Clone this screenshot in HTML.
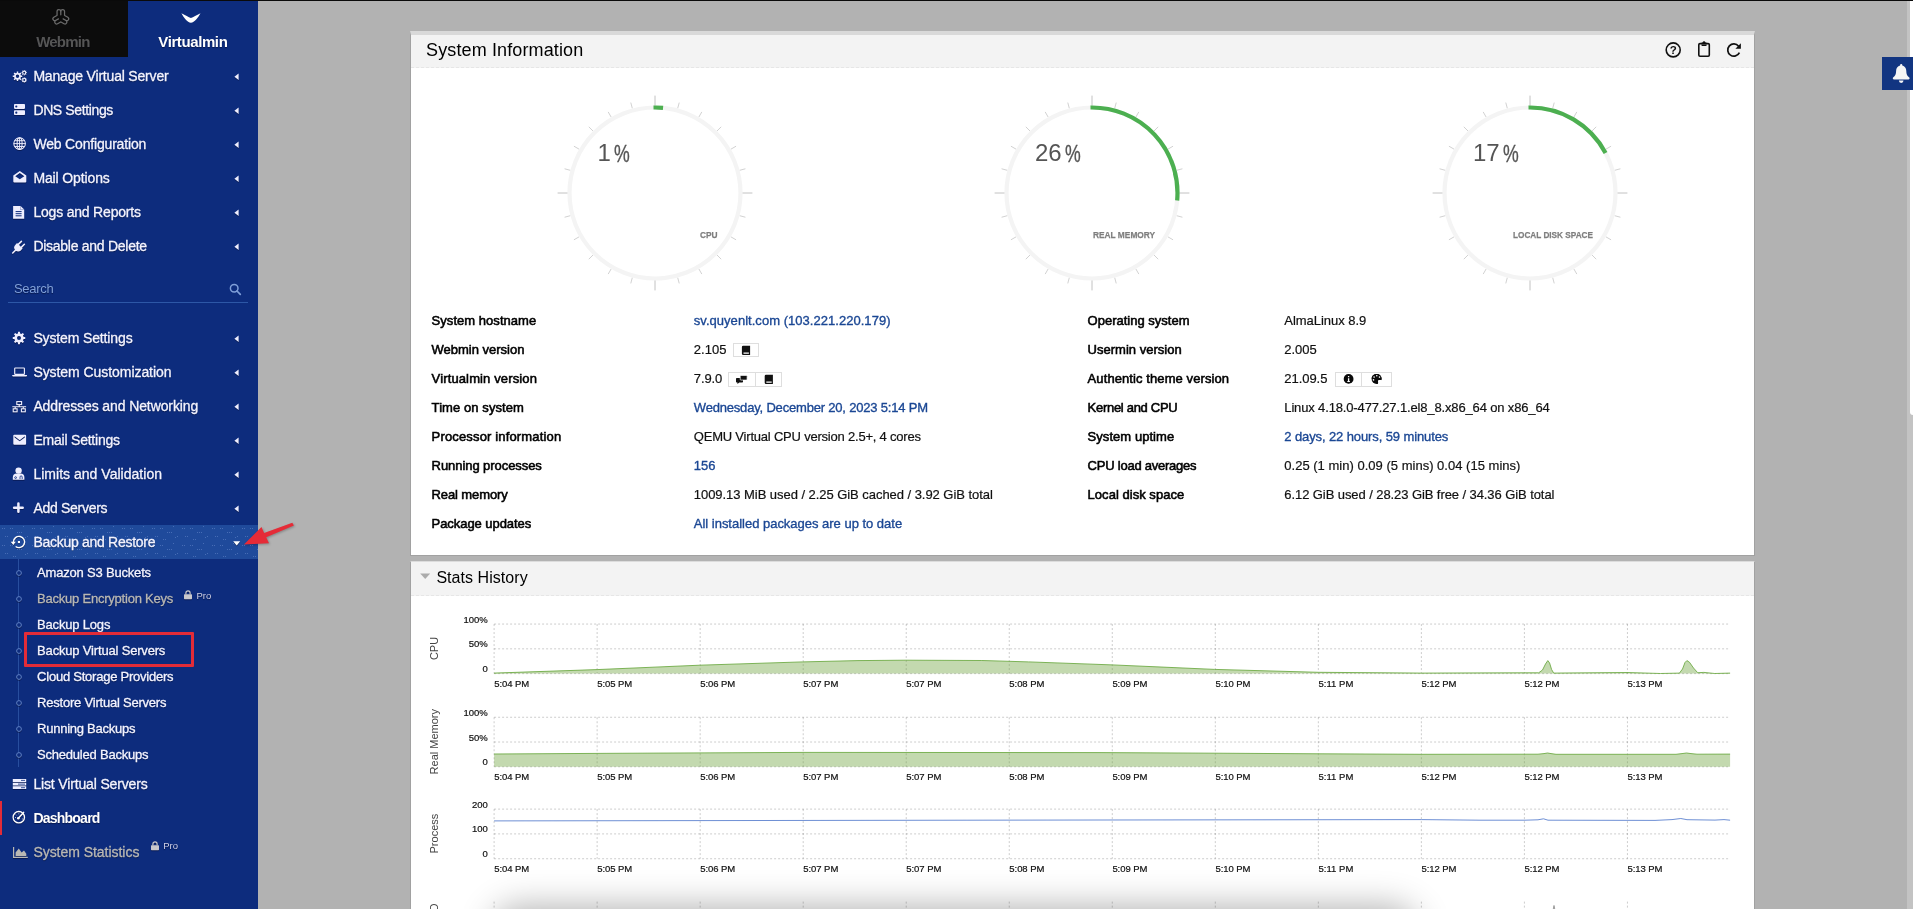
<!DOCTYPE html>
<html lang="en">
<head>
<meta charset="utf-8">
<title>Virtualmin - System Information</title>
<style>
html,body{margin:0;padding:0}
html{overflow:hidden}
body{width:1913px;height:909px;overflow:hidden;position:relative;background:#b2b2b2;
 font-family:"Liberation Sans",Arial,sans-serif;color:#000}
.t{position:absolute;white-space:pre;line-height:1;display:block;text-decoration:none}
ul{list-style:none;margin:0;padding:0}
svg{position:absolute;overflow:visible}
#topline{position:absolute;left:0;top:0;width:1913px;height:1px;background:#0a0a0a;z-index:5}
/* ---------- sidebar ---------- */
#sidebar{will-change:transform;position:absolute;left:0;top:0;width:258px;height:909px;background:#0d2c7d;overflow:hidden}
#tab-webmin{position:absolute;left:0;top:0;width:128px;height:56.5px;background:#0c0c0c}
#tab-virtualmin{position:absolute;left:128px;top:0;width:130px;height:56.5px}
#sidebar .t{text-shadow:0 1px 1px rgba(0,0,20,.45)}
#sidebar li{position:absolute;left:0;width:258px}
#sidebar li>svg{filter:drop-shadow(0 1px .4px rgba(0,0,25,.4))}
#sidebar li.hl>svg:first-child{filter:none}
#sidebar li.hl{background:#1f4a9b}
#search-line{position:absolute;left:8px;top:302px;width:240px;height:1px;background:#2d57a6}
#tree-line{position:absolute;left:18px;top:559px;width:1px;height:208px;background:#284e9e}
#active-bar{position:absolute;left:0;top:801px;width:2px;height:34px;background:#e22c38}
/* ---------- main ---------- */
#main{position:absolute;left:258px;top:0;width:1655px;height:909px;overflow:hidden}
.panel{position:absolute;background:#fff;box-sizing:border-box;border:1px solid #a1a1a1;will-change:transform}
.panel-head{position:absolute;left:0;right:0;background:#f3f3f3;border-bottom:1px dashed #e6e6e6}
.vbtn{position:absolute;box-sizing:border-box;border:1px solid #dedede;background:#fff}
#bell{position:absolute;left:1882px;top:57px;width:31px;height:33px;background:#123581}
#sb-track{position:absolute;left:1907px;top:1px;width:6px;height:908px;background:#c3c3c3}
#sb-thumb{position:absolute;left:1910px;top:1px;width:3px;height:414px;background:#fff;border-radius:0 0 0 3px}

</style>
</head>
<body>
<aside id="sidebar">
<div id="tab-webmin"><svg width="24" height="22" viewBox="49 6 24 22" style="left:49px;top:6px"><path d="M57.05 15.15 L57.05 11.60 A1.875 1.875 0 0 1 60.80 11.60 A1.875 1.875 0 0 1 64.55 11.60 L64.55 15.15 L64.71 15.43 L67.78 17.20 A1.875 1.875 0 0 1 65.91 20.45 A1.875 1.875 0 0 1 64.03 23.70 L60.96 21.92 L60.64 21.92 L57.57 23.70 A1.875 1.875 0 0 1 55.69 20.45 A1.875 1.875 0 0 1 53.82 17.20 L56.89 15.43 Z" fill="none" stroke="#6b6b6b" stroke-width="1.25" stroke-linejoin="round"/><path d="M60.80 11.90 L60.80 14.80 M65.65 20.30 L63.14 18.85 M55.95 20.30 L58.46 18.85 " fill="none" stroke="#6b6b6b" stroke-width="1.25" stroke-linecap="round"/></svg><span class="t" style="left:36.20px;top:34.10px;font-size:15px;font-weight:700;color:#555;letter-spacing:-0.775px;">Webmin</span></div>
<div id="tab-virtualmin"><svg width="22" height="12" viewBox="180 12 22 12" style="left:52px;top:12px"><path fill="#fff" d="M181.400 13.300 C185.500 15.200 188.500 17.400 190.900 18.000 C193.400 17.400 196.400 15.200 200.500 13.300 C198.300 17.200 194.400 22.800 190.900 22.800 C187.400 22.800 183.600 17.200 181.400 13.300Z"/></svg><span class="t" style="left:30.30px;top:34.10px;font-size:15px;font-weight:700;color:#fff;letter-spacing:-0.398px;">Virtualmin</span></div>
<nav><ul>
<li style="top:59px;height:34px"><svg width="32" height="34" viewBox="0 59 32 34" style="left:0;top:0"><path fill="#eeeeff" fill-rule="evenodd" d="M20.91 75.52 L22.25 75.60 L22.25 77.00 L20.91 77.08 L20.47 78.16 L21.36 79.16 L20.36 80.16 L19.36 79.27 L18.28 79.71 L18.20 81.05 L16.80 81.05 L16.72 79.71 L15.64 79.27 L14.64 80.16 L13.64 79.16 L14.53 78.16 L14.09 77.08 L12.75 77.00 L12.75 75.60 L14.09 75.52 L14.53 74.44 L13.64 73.44 L14.64 72.44 L15.64 73.33 L16.72 72.89 L16.80 71.55 L18.20 71.55 L18.28 72.89 L19.36 73.33 L20.36 72.44 L21.36 73.44 L20.47 74.44Z M15.80 76.30 a1.70 1.70 0 1 0 3.40 0 a1.70 1.70 0 1 0 -3.40 0Z"/><path fill="#eeeeff" fill-rule="evenodd" d="M26.10 72.26 L26.97 72.29 L26.97 73.11 L26.10 73.14 L25.85 73.74 L26.45 74.37 L25.87 74.95 L25.24 74.35 L24.64 74.60 L24.61 75.47 L23.79 75.47 L23.76 74.60 L23.16 74.35 L22.53 74.95 L21.95 74.37 L22.55 73.74 L22.30 73.14 L21.43 73.11 L21.43 72.29 L22.30 72.26 L22.55 71.66 L21.95 71.03 L22.53 70.45 L23.16 71.05 L23.76 70.80 L23.79 69.93 L24.61 69.93 L24.64 70.80 L25.24 71.05 L25.87 70.45 L26.45 71.03 L25.85 71.66Z M23.25 72.70 a0.95 0.95 0 1 0 1.90 0 a0.95 0.95 0 1 0 -1.90 0Z"/><path fill="#eeeeff" fill-rule="evenodd" d="M26.10 79.56 L26.97 79.59 L26.97 80.41 L26.10 80.44 L25.85 81.04 L26.45 81.67 L25.87 82.25 L25.24 81.65 L24.64 81.90 L24.61 82.77 L23.79 82.77 L23.76 81.90 L23.16 81.65 L22.53 82.25 L21.95 81.67 L22.55 81.04 L22.30 80.44 L21.43 80.41 L21.43 79.59 L22.30 79.56 L22.55 78.96 L21.95 78.33 L22.53 77.75 L23.16 78.35 L23.76 78.10 L23.79 77.23 L24.61 77.23 L24.64 78.10 L25.24 78.35 L25.87 77.75 L26.45 78.33 L25.85 78.96Z M23.25 80.00 a0.95 0.95 0 1 0 1.90 0 a0.95 0.95 0 1 0 -1.90 0Z"/></svg><a class="t" style="left:33.40px;top:9.85px;font-size:14px;color:#f4f4ff;letter-spacing:-0.188px;-webkit-text-stroke:.3px;">Manage Virtual Server</a><svg width="6" height="8" viewBox="0 0 6 8" style="left:233.5px;top:13.8px"><path fill="#eeeeff" d="M4.6 0.4 V7.1 L0.4 3.75Z"/></svg></li>
<li style="top:93px;height:34px"><svg width="32" height="34" viewBox="0 93 32 34" style="left:0;top:0"><rect x="14" y="104" width="11" height="4.9" rx="0.8" fill="#eeeeff"/><rect x="14" y="110.2" width="11" height="4.9" rx="0.8" fill="#eeeeff"/><circle cx="16.3" cy="106.5" r="1.1" fill="#0d2c7d"/><circle cx="16.3" cy="112.7" r="1.1" fill="#0d2c7d"/></svg><a class="t" style="left:33.40px;top:9.85px;font-size:14px;color:#f4f4ff;letter-spacing:-0.369px;-webkit-text-stroke:.3px;">DNS Settings</a><svg width="6" height="8" viewBox="0 0 6 8" style="left:233.5px;top:13.8px"><path fill="#eeeeff" d="M4.6 0.4 V7.1 L0.4 3.75Z"/></svg></li>
<li style="top:127px;height:34px"><svg width="32" height="34" viewBox="0 127 32 34" style="left:0;top:0"><g fill="none" stroke="#eeeeff" stroke-width="1.05"><circle cx="19.6" cy="143.6" r="5.8"/><ellipse cx="19.6" cy="143.6" rx="2.5" ry="5.8"/><path d="M13.8 143.6h11.6M14.6 140.7h10M14.6 146.5h10M19.6 137.8v11.6" stroke-width=".95"/></g></svg><a class="t" style="left:33.40px;top:9.85px;font-size:14px;color:#f4f4ff;letter-spacing:-0.176px;-webkit-text-stroke:.3px;">Web Configuration</a><svg width="6" height="8" viewBox="0 0 6 8" style="left:233.5px;top:13.8px"><path fill="#eeeeff" d="M4.6 0.4 V7.1 L0.4 3.75Z"/></svg></li>
<li style="top:161px;height:34px"><svg width="32" height="34" viewBox="0 161 32 34" style="left:0;top:0"><path fill="#eeeeff" fill-rule="evenodd" d="M13.3 175.6 L19.8 170.9 L26.3 175.6 V181.5 a1 1 0 0 1 -1 1 H14.3 a1 1 0 0 1 -1 -1Z M15.3 176.2 L19.8 179.3 L24.3 176.2 L19.8 172.9Z"/></svg><a class="t" style="left:33.40px;top:9.85px;font-size:14px;color:#f4f4ff;letter-spacing:-0.123px;-webkit-text-stroke:.3px;">Mail Options</a><svg width="6" height="8" viewBox="0 0 6 8" style="left:233.5px;top:13.8px"><path fill="#eeeeff" d="M4.6 0.4 V7.1 L0.4 3.75Z"/></svg></li>
<li style="top:195px;height:34px"><svg width="32" height="34" viewBox="0 195 32 34" style="left:0;top:0"><path fill="#eeeeff" d="M13.1 206 H20.6 L24.2 209.6 V218.8 H13.1Z"/><path fill="#0d2c7d" d="M20.4 206 V209.9 H24.2 L24.2 209.6 H20.9 V206Z" opacity=".55"/><path stroke="#0d2c7d" stroke-width="1" d="M15.6 211.6h6M15.6 213.7h6M15.6 215.8h6"/></svg><a class="t" style="left:33.40px;top:9.85px;font-size:14px;color:#f4f4ff;letter-spacing:-0.196px;-webkit-text-stroke:.3px;">Logs and Reports</a><svg width="6" height="8" viewBox="0 0 6 8" style="left:233.5px;top:13.8px"><path fill="#eeeeff" d="M4.6 0.4 V7.1 L0.4 3.75Z"/></svg></li>
<li style="top:229px;height:34px"><svg width="32" height="34" viewBox="0 229 32 34" style="left:0;top:0"><g transform="rotate(45 18.5 247.2)"><path fill="#eeeeff" d="M14.6 245.3 H22.4 V247.6 a3.9 3.9 0 0 1 -7.8 0Z"/><path stroke="#eeeeff" stroke-width="1.6" stroke-linecap="round" d="M16.4 241v4M20.6 241v4"/><path stroke="#eeeeff" stroke-width="1.5" stroke-linecap="round" d="M18.5 251v4.4"/></g></svg><a class="t" style="left:33.40px;top:9.85px;font-size:14px;color:#f4f4ff;letter-spacing:-0.268px;-webkit-text-stroke:.3px;">Disable and Delete</a><svg width="6" height="8" viewBox="0 0 6 8" style="left:233.5px;top:13.8px"><path fill="#eeeeff" d="M4.6 0.4 V7.1 L0.4 3.75Z"/></svg></li>
<li style="top:321px;height:34px"><svg width="32" height="34" viewBox="0 321 32 34" style="left:0;top:0"><path fill="#eeeeff" fill-rule="evenodd" d="M23.58 336.95 L25.23 337.08 L25.23 338.92 L23.58 339.05 L22.98 340.49 L24.06 341.75 L22.75 343.06 L21.49 341.98 L20.05 342.58 L19.92 344.23 L18.08 344.23 L17.95 342.58 L16.51 341.98 L15.25 343.06 L13.94 341.75 L15.02 340.49 L14.42 339.05 L12.77 338.92 L12.77 337.08 L14.42 336.95 L15.02 335.51 L13.94 334.25 L15.25 332.94 L16.51 334.02 L17.95 333.42 L18.08 331.77 L19.92 331.77 L20.05 333.42 L21.49 334.02 L22.75 332.94 L24.06 334.25 L22.98 335.51Z M17.00 338.00 a2.00 2.00 0 1 0 4.00 0 a2.00 2.00 0 1 0 -4.00 0Z"/></svg><a class="t" style="left:33.40px;top:9.85px;font-size:14px;color:#f4f4ff;letter-spacing:-0.135px;-webkit-text-stroke:.3px;">System Settings</a><svg width="6" height="8" viewBox="0 0 6 8" style="left:233.5px;top:13.8px"><path fill="#eeeeff" d="M4.6 0.4 V7.1 L0.4 3.75Z"/></svg></li>
<li style="top:355px;height:34px"><svg width="32" height="34" viewBox="0 355 32 34" style="left:0;top:0"><rect x="14.7" y="368" width="9.7" height="6.4" rx="0.6" fill="none" stroke="#eeeeff" stroke-width="1.15"/><path fill="#eeeeff" d="M12.2 375 H27 V375.6 a0.9 0.9 0 0 1 -0.9 0.9 H13.1 a0.9 0.9 0 0 1 -0.9 -0.9Z"/></svg><a class="t" style="left:33.40px;top:9.85px;font-size:14px;color:#f4f4ff;letter-spacing:-0.061px;-webkit-text-stroke:.3px;">System Customization</a><svg width="6" height="8" viewBox="0 0 6 8" style="left:233.5px;top:13.8px"><path fill="#eeeeff" d="M4.6 0.4 V7.1 L0.4 3.75Z"/></svg></li>
<li style="top:389px;height:34px"><svg width="32" height="34" viewBox="0 389 32 34" style="left:0;top:0"><g fill="none" stroke="#eeeeff" stroke-width="1.1"><rect x="16.8" y="401.6" width="4.8" height="3"/><rect x="13.2" y="408.8" width="3.9" height="3"/><rect x="21.4" y="408.8" width="3.9" height="3"/><path d="M12.3 406.7h13.8M19.2 404.8v1.9M15.2 406.7v2M23.3 406.7v2" stroke-width="1.1"/></g></svg><a class="t" style="left:33.40px;top:9.85px;font-size:14px;color:#f4f4ff;letter-spacing:-0.107px;-webkit-text-stroke:.3px;">Addresses and Networking</a><svg width="6" height="8" viewBox="0 0 6 8" style="left:233.5px;top:13.8px"><path fill="#eeeeff" d="M4.6 0.4 V7.1 L0.4 3.75Z"/></svg></li>
<li style="top:423px;height:34px"><svg width="32" height="34" viewBox="0 423 32 34" style="left:0;top:0"><path fill="#eeeeff" fill-rule="evenodd" d="M14.3 434.8 H25.1 a1 1 0 0 1 1 1 V443.8 a1 1 0 0 1 -1 1 H14.3 a1 1 0 0 1 -1 -1 V435.8 a1 1 0 0 1 1 -1Z M14.6 436.3 L19.7 440.2 L24.8 436.3 L24.8 437.4 L19.7 441.3 L14.6 437.4Z"/></svg><a class="t" style="left:33.40px;top:9.85px;font-size:14px;color:#f4f4ff;letter-spacing:-0.214px;-webkit-text-stroke:.3px;">Email Settings</a><svg width="6" height="8" viewBox="0 0 6 8" style="left:233.5px;top:13.8px"><path fill="#eeeeff" d="M4.6 0.4 V7.1 L0.4 3.75Z"/></svg></li>
<li style="top:457px;height:34px"><svg width="32" height="34" viewBox="0 457 32 34" style="left:0;top:0"><circle cx="18.6" cy="470.6" r="3.2" fill="#eeeeff"/><path fill="#eeeeff" d="M12.8 479.8 V477.6 a4 4 0 0 1 4 -4 H20.4 a4 4 0 0 1 4 4 V479.8Z"/><circle cx="15.6" cy="477.6" r="0.9" fill="none" stroke="#0d2c7d" stroke-width=".8"/><path fill="none" stroke="#0d2c7d" stroke-width=".8" d="M20 479 v-2 a1.1 1.1 0 0 1 2.2 0 v2"/></svg><a class="t" style="left:33.40px;top:9.85px;font-size:14px;color:#f4f4ff;letter-spacing:0.022px;-webkit-text-stroke:.3px;">Limits and Validation</a><svg width="6" height="8" viewBox="0 0 6 8" style="left:233.5px;top:13.8px"><path fill="#eeeeff" d="M4.6 0.4 V7.1 L0.4 3.75Z"/></svg></li>
<li style="top:491px;height:34px"><svg width="32" height="34" viewBox="0 491 32 34" style="left:0;top:0"><path stroke="#eeeeff" stroke-width="2.5" stroke-linecap="round" d="M14.1 507.7h8.6M18.4 503.6v8.2"/></svg><a class="t" style="left:33.40px;top:9.85px;font-size:14px;color:#f4f4ff;letter-spacing:-0.290px;-webkit-text-stroke:.3px;">Add Servers</a><svg width="6" height="8" viewBox="0 0 6 8" style="left:233.5px;top:13.8px"><path fill="#eeeeff" d="M4.6 0.4 V7.1 L0.4 3.75Z"/></svg></li>
<li class="hl" style="top:525px;height:34px"><svg width="258" height="34" style="left:0;top:0" aria-hidden="true"><defs><pattern id="hltex" width="30" height="17" patternUnits="userSpaceOnUse"><path fill="#7f9ddb" fill-opacity=".42" d="M2 3h1v1h-1zM4 3h1v1h-1zM10 3h1v1h-1zM12 3h1v1h-1zM17 7h1v1h-1zM19 7h1v1h-1zM21 7h1v1h-1zM5 11h1v1h-1zM7 11h1v1h-1zM25 12h1v1h-1zM27 11h1v1h-1zM13 14h1v1h-1zM15 14h1v1h-1zM23 1h1v1h-1z"/></pattern></defs><rect width="258" height="34" fill="url(#hltex)"/></svg><svg width="32" height="34" viewBox="0 525 32 34" style="left:0;top:0"><path fill="none" stroke="#fff" stroke-width="1.4" d="M13.4 542 a5.6 5.6 0 1 1 2.2 4.45"/><path fill="#fff" d="M10.7 541.7 H15.8 L13.3 545.1Z"/><rect x="17.9" y="541" width="2.1" height="2.1" fill="#fff"/></svg><a class="t" style="left:33.40px;top:9.85px;font-size:14px;color:#f4f4ff;letter-spacing:-0.283px;-webkit-text-stroke:.3px;">Backup and Restore</a><svg width="8" height="6" viewBox="0 0 8 6" style="left:233px;top:15.8px"><path fill="#fff" d="M0.2 0.2 H7.2 L3.7 4.4Z"/></svg></li>
</ul>
<div id="search"><span class="t" style="left:14.00px;top:281.90px;font-size:13px;color:#7f9fd9;letter-spacing:-0.310px;">Search</span><svg width="14" height="14" viewBox="0 0 14 14" style="left:228.6px;top:282.6px"><circle cx="5.2" cy="5.2" r="3.8" fill="none" stroke="#7f9fd9" stroke-width="1.5"/><path d="M8.0 8.0 L11.3 11.3" stroke="#7f9fd9" stroke-width="1.7" stroke-linecap="round"/></svg><div id="search-line"></div></div>
<div id="tree-line"></div>
<ul>
<li style="top:559.5px;height:26px"><svg style="left:14.5px;top:9px" width="8" height="8" viewBox="0 0 8 8"><circle cx="4" cy="4" r="2.4" fill="#0d2c7d" stroke="#5f80c4" stroke-width="1"/></svg><a class="t" style="left:37.10px;top:6.60px;font-size:13px;color:#f4f4ff;letter-spacing:-0.192px;-webkit-text-stroke:.3px;">Amazon S3 Buckets</a></li>
<li style="top:585.5px;height:26px"><svg style="left:14.5px;top:9px" width="8" height="8" viewBox="0 0 8 8"><circle cx="4" cy="4" r="2.4" fill="#0d2c7d" stroke="#5f80c4" stroke-width="1"/></svg><a class="t" style="left:37.10px;top:6.60px;font-size:13px;color:#b9b8b4;letter-spacing:-0.224px;-webkit-text-stroke:.3px;">Backup Encryption Keys</a><svg width="9" height="10" viewBox="0 0 9 10" style="left:183.8px;top:4.4px"><path fill="#c9c8cc" d="M0.6 4.2 H7.4 a0.6 0.6 0 0 1 .6 .6 V8.6 a0.6 0.6 0 0 1 -.6 .6 H0.6 a0.6 0.6 0 0 1 -.6 -.6 V4.8 a0.6 0.6 0 0 1 .6 -.6Z"/><path fill="none" stroke="#c9c8cc" stroke-width="1.2" d="M1.9 4.4 V2.9 a2.1 2.1 0 0 1 4.2 0 V4.4"/></svg><span class="t" style="left:196.50px;top:5.66px;font-size:9.5px;color:#cfd0e6;letter-spacing:-0.039px;">Pro</span></li>
<li style="top:611.5px;height:26px"><svg style="left:14.5px;top:9px" width="8" height="8" viewBox="0 0 8 8"><circle cx="4" cy="4" r="2.4" fill="#0d2c7d" stroke="#5f80c4" stroke-width="1"/></svg><a class="t" style="left:37.10px;top:6.60px;font-size:13px;color:#f4f4ff;letter-spacing:-0.188px;-webkit-text-stroke:.3px;">Backup Logs</a></li>
<li style="top:637.5px;height:26px"><svg style="left:14.5px;top:9px" width="8" height="8" viewBox="0 0 8 8"><circle cx="4" cy="4" r="2.4" fill="#0d2c7d" stroke="#5f80c4" stroke-width="1"/></svg><a class="t" style="left:37.10px;top:6.60px;font-size:13px;color:#f4f4ff;letter-spacing:-0.177px;-webkit-text-stroke:.3px;">Backup Virtual Servers</a></li>
<li style="top:663.5px;height:26px"><svg style="left:14.5px;top:9px" width="8" height="8" viewBox="0 0 8 8"><circle cx="4" cy="4" r="2.4" fill="#0d2c7d" stroke="#5f80c4" stroke-width="1"/></svg><a class="t" style="left:37.10px;top:6.60px;font-size:13px;color:#f4f4ff;letter-spacing:-0.233px;-webkit-text-stroke:.3px;">Cloud Storage Providers</a></li>
<li style="top:689.5px;height:26px"><svg style="left:14.5px;top:9px" width="8" height="8" viewBox="0 0 8 8"><circle cx="4" cy="4" r="2.4" fill="#0d2c7d" stroke="#5f80c4" stroke-width="1"/></svg><a class="t" style="left:37.10px;top:6.60px;font-size:13px;color:#f4f4ff;letter-spacing:-0.216px;-webkit-text-stroke:.3px;">Restore Virtual Servers</a></li>
<li style="top:715.5px;height:26px"><svg style="left:14.5px;top:9px" width="8" height="8" viewBox="0 0 8 8"><circle cx="4" cy="4" r="2.4" fill="#0d2c7d" stroke="#5f80c4" stroke-width="1"/></svg><a class="t" style="left:37.10px;top:6.60px;font-size:13px;color:#f4f4ff;letter-spacing:-0.256px;-webkit-text-stroke:.3px;">Running Backups</a></li>
<li style="top:741.5px;height:26px"><svg style="left:14.5px;top:9px" width="8" height="8" viewBox="0 0 8 8"><circle cx="4" cy="4" r="2.4" fill="#0d2c7d" stroke="#5f80c4" stroke-width="1"/></svg><a class="t" style="left:37.10px;top:6.60px;font-size:13px;color:#f4f4ff;letter-spacing:-0.220px;-webkit-text-stroke:.3px;">Scheduled Backups</a></li>
</ul>
<ul>
<li style="top:767px;height:34px"><svg width="32" height="34" viewBox="0 767 32 34" style="left:0;top:0"><path fill="#eeeeff" d="M12.8 779 H26.2 V781.9 H12.8Z M12.8 782.7 H26.2 V785.5 H12.8Z M12.8 786.3 H26.2 V789.1 H12.8Z"/><path stroke="#0d2c7d" stroke-width=".8" d="M21 780.4h4M18 784.1h7M21 787.7h4"/></svg><a class="t" style="left:33.40px;top:9.85px;font-size:14px;color:#f4f4ff;letter-spacing:-0.150px;-webkit-text-stroke:.3px;">List Virtual Servers</a></li>
<li style="top:801px;height:34px"><svg width="32" height="34" viewBox="0 801 32 34" style="left:0;top:0"><circle cx="18.8" cy="817.2" r="5.7" fill="none" stroke="#fff" stroke-width="1.3"/><path stroke="#fff" stroke-width="1.5" stroke-linecap="round" d="M18.3 818.3 L23.6 812.4"/><circle cx="18.3" cy="818.3" r="1.3" fill="#fff"/><path stroke="#fff" stroke-width=".8" d="M15 817.6h.9M15.9 814.7l.6.6M18.8 813.4v.9M21.9 819h.9"/></svg><a class="t" style="left:33.40px;top:9.85px;font-size:14px;font-weight:700;color:#fff;letter-spacing:-0.768px;">Dashboard</a></li>
<li style="top:835px;height:34px"><svg width="32" height="34" viewBox="0 835 32 34" style="left:0;top:0"><path fill="none" stroke="#b9b8b4" stroke-width="1.2" d="M13.6 846.9 V857.3 H27.8"/><path fill="#b9b8b4" d="M15.6 856 V852.6 L18.8 848.6 L21.6 852.4 L24 850.4 L26.3 853.8 V856Z"/></svg><a class="t" style="left:33.40px;top:9.85px;font-size:14px;color:#b9b8b4;letter-spacing:-0.036px;-webkit-text-stroke:.3px;">System Statistics</a><svg width="9" height="10" viewBox="0 0 9 10" style="left:150.7px;top:6.4px"><path fill="#c9c8cc" d="M0.6 4.2 H7.4 a0.6 0.6 0 0 1 .6 .6 V8.6 a0.6 0.6 0 0 1 -.6 .6 H0.6 a0.6 0.6 0 0 1 -.6 -.6 V4.8 a0.6 0.6 0 0 1 .6 -.6Z"/><path fill="none" stroke="#c9c8cc" stroke-width="1.2" d="M1.9 4.4 V2.9 a2.1 2.1 0 0 1 4.2 0 V4.4"/></svg><span class="t" style="left:163.30px;top:5.86px;font-size:9.5px;color:#cfd0e6;letter-spacing:-0.039px;">Pro</span></li>
</ul></nav>
<div id="active-bar"></div>
</aside>
<main id="main">
<section class="panel" style="left:152px;top:31px;width:1345px;height:525px;border-top:4px solid #d9d9d9">
<header class="panel-head" style="top:0;height:32px"><h2 class="t" style="left:15.00px;top:5.96px;font-size:18px;letter-spacing:0.128px;margin:0;font-weight:400;">System Information</h2><svg width="90" height="24" viewBox="1660 38 90 24" style="left:1249px;top:3px"><circle cx="1673.2" cy="49.9" r="7.0" fill="none" stroke="#111" stroke-width="1.6"/><text x="1673.2" y="54.0" text-anchor="middle" font-size="11.5" font-weight="700" fill="#111">?</text><rect x="1698.8" y="43.6" width="10.5" height="12.6" rx="1.2" fill="none" stroke="#111" stroke-width="1.6"/><path d="M1701.3 44.2 V43.2 a0.8 0.8 0 0 1 .8 -.8 H1702.6 a1.5 1.5 0 0 1 2.9 0 H1706 a0.8 0.8 0 0 1 .8 .8 V44.2Z" fill="#111"/><path d="M1701.6 45.3 H1706.5" stroke="#111" stroke-width="1.4"/><path d="M1738.6 46.2 A6.1 6.1 0 1 0 1739.4 52.6" fill="none" stroke="#111" stroke-width="1.7"/><path d="M1740.9 43.2 V48.7 H1735.4Z" fill="#111"/></svg></header>
<figure style="position:absolute;margin:0;left:138.65px;top:53.4px;width:210px;height:210px"><svg width="210" height="210" viewBox="-105 -105 210 210" style="left:0;top:0"><line x1="0.00" y1="-87.00" x2="0.00" y2="-97.40" stroke="#c2c2c2" stroke-width="1"/><line x1="22.65" y1="-84.52" x2="24.23" y2="-90.41" stroke="#d2d2d2" stroke-width="1"/><line x1="43.75" y1="-75.78" x2="46.80" y2="-81.06" stroke="#d2d2d2" stroke-width="1"/><line x1="61.87" y1="-61.87" x2="66.19" y2="-66.19" stroke="#d2d2d2" stroke-width="1"/><line x1="75.78" y1="-43.75" x2="81.06" y2="-46.80" stroke="#d2d2d2" stroke-width="1"/><line x1="84.52" y1="-22.65" x2="90.41" y2="-24.23" stroke="#d2d2d2" stroke-width="1"/><line x1="87.00" y1="-0.00" x2="97.40" y2="-0.00" stroke="#c2c2c2" stroke-width="1"/><line x1="84.52" y1="22.65" x2="90.41" y2="24.23" stroke="#d2d2d2" stroke-width="1"/><line x1="75.78" y1="43.75" x2="81.06" y2="46.80" stroke="#d2d2d2" stroke-width="1"/><line x1="61.87" y1="61.87" x2="66.19" y2="66.19" stroke="#d2d2d2" stroke-width="1"/><line x1="43.75" y1="75.78" x2="46.80" y2="81.06" stroke="#d2d2d2" stroke-width="1"/><line x1="22.65" y1="84.52" x2="24.23" y2="90.41" stroke="#d2d2d2" stroke-width="1"/><line x1="0.00" y1="87.00" x2="0.00" y2="97.40" stroke="#c2c2c2" stroke-width="1"/><line x1="-22.65" y1="84.52" x2="-24.23" y2="90.41" stroke="#d2d2d2" stroke-width="1"/><line x1="-43.75" y1="75.78" x2="-46.80" y2="81.06" stroke="#d2d2d2" stroke-width="1"/><line x1="-61.87" y1="61.87" x2="-66.19" y2="66.19" stroke="#d2d2d2" stroke-width="1"/><line x1="-75.78" y1="43.75" x2="-81.06" y2="46.80" stroke="#d2d2d2" stroke-width="1"/><line x1="-84.52" y1="22.65" x2="-90.41" y2="24.23" stroke="#d2d2d2" stroke-width="1"/><line x1="-87.00" y1="0.00" x2="-97.40" y2="0.00" stroke="#c2c2c2" stroke-width="1"/><line x1="-84.52" y1="-22.65" x2="-90.41" y2="-24.23" stroke="#d2d2d2" stroke-width="1"/><line x1="-75.78" y1="-43.75" x2="-81.06" y2="-46.80" stroke="#d2d2d2" stroke-width="1"/><line x1="-61.87" y1="-61.87" x2="-66.19" y2="-66.19" stroke="#d2d2d2" stroke-width="1"/><line x1="-43.75" y1="-75.78" x2="-46.80" y2="-81.06" stroke="#d2d2d2" stroke-width="1"/><line x1="-22.65" y1="-84.52" x2="-24.23" y2="-90.41" stroke="#d2d2d2" stroke-width="1"/><circle cx="0" cy="0" r="85.5" fill="none" stroke="#f4f4f4" stroke-width="4.2"/><path d="M-1.49 -85.49 A85.5 85.5 0 0 1 8.05 -85.12" fill="none" stroke="#4caf50" stroke-width="4.2"/></svg><span class="t" style="left:47.80px;top:52.78px;font-size:24px;color:#555;">1</span><span class="t" style="left:64.48px;top:54.33px;font-size:23px;color:#555;transform:scaleX(.77);transform-origin:0 50%;-webkit-text-stroke:.35px #555;">%</span><figcaption class="t" style="left:150.20px;top:142.05px;font-size:9.8px;font-weight:700;color:#7e7e7e;transform:scaleX(0.8508);transform-origin:0 50%;-webkit-text-stroke:.25px;">CPU</figcaption></figure>
<figure style="position:absolute;margin:0;left:576.1px;top:53.4px;width:210px;height:210px"><svg width="210" height="210" viewBox="-105 -105 210 210" style="left:0;top:0"><line x1="0.00" y1="-87.00" x2="0.00" y2="-97.40" stroke="#c2c2c2" stroke-width="1"/><line x1="22.65" y1="-84.52" x2="24.23" y2="-90.41" stroke="#d2d2d2" stroke-width="1"/><line x1="43.75" y1="-75.78" x2="46.80" y2="-81.06" stroke="#d2d2d2" stroke-width="1"/><line x1="61.87" y1="-61.87" x2="66.19" y2="-66.19" stroke="#d2d2d2" stroke-width="1"/><line x1="75.78" y1="-43.75" x2="81.06" y2="-46.80" stroke="#d2d2d2" stroke-width="1"/><line x1="84.52" y1="-22.65" x2="90.41" y2="-24.23" stroke="#d2d2d2" stroke-width="1"/><line x1="87.00" y1="-0.00" x2="97.40" y2="-0.00" stroke="#c2c2c2" stroke-width="1"/><line x1="84.52" y1="22.65" x2="90.41" y2="24.23" stroke="#d2d2d2" stroke-width="1"/><line x1="75.78" y1="43.75" x2="81.06" y2="46.80" stroke="#d2d2d2" stroke-width="1"/><line x1="61.87" y1="61.87" x2="66.19" y2="66.19" stroke="#d2d2d2" stroke-width="1"/><line x1="43.75" y1="75.78" x2="46.80" y2="81.06" stroke="#d2d2d2" stroke-width="1"/><line x1="22.65" y1="84.52" x2="24.23" y2="90.41" stroke="#d2d2d2" stroke-width="1"/><line x1="0.00" y1="87.00" x2="0.00" y2="97.40" stroke="#c2c2c2" stroke-width="1"/><line x1="-22.65" y1="84.52" x2="-24.23" y2="90.41" stroke="#d2d2d2" stroke-width="1"/><line x1="-43.75" y1="75.78" x2="-46.80" y2="81.06" stroke="#d2d2d2" stroke-width="1"/><line x1="-61.87" y1="61.87" x2="-66.19" y2="66.19" stroke="#d2d2d2" stroke-width="1"/><line x1="-75.78" y1="43.75" x2="-81.06" y2="46.80" stroke="#d2d2d2" stroke-width="1"/><line x1="-84.52" y1="22.65" x2="-90.41" y2="24.23" stroke="#d2d2d2" stroke-width="1"/><line x1="-87.00" y1="0.00" x2="-97.40" y2="0.00" stroke="#c2c2c2" stroke-width="1"/><line x1="-84.52" y1="-22.65" x2="-90.41" y2="-24.23" stroke="#d2d2d2" stroke-width="1"/><line x1="-75.78" y1="-43.75" x2="-81.06" y2="-46.80" stroke="#d2d2d2" stroke-width="1"/><line x1="-61.87" y1="-61.87" x2="-66.19" y2="-66.19" stroke="#d2d2d2" stroke-width="1"/><line x1="-43.75" y1="-75.78" x2="-46.80" y2="-81.06" stroke="#d2d2d2" stroke-width="1"/><line x1="-22.65" y1="-84.52" x2="-24.23" y2="-90.41" stroke="#d2d2d2" stroke-width="1"/><circle cx="0" cy="0" r="85.5" fill="none" stroke="#f4f4f4" stroke-width="4.2"/><path d="M-1.49 -85.49 A85.5 85.5 0 0 1 85.17 7.45" fill="none" stroke="#4caf50" stroke-width="4.2"/></svg><span class="t" style="left:47.80px;top:52.78px;font-size:24px;color:#555;">26</span><span class="t" style="left:77.96px;top:54.33px;font-size:23px;color:#555;transform:scaleX(.77);transform-origin:0 50%;-webkit-text-stroke:.35px #555;">%</span><figcaption class="t" style="left:105.70px;top:142.05px;font-size:9.8px;font-weight:700;color:#7e7e7e;transform:scaleX(0.8514);transform-origin:0 50%;-webkit-text-stroke:.25px;">REAL MEMORY</figcaption></figure>
<figure style="position:absolute;margin:0;left:1014.2px;top:53.4px;width:210px;height:210px"><svg width="210" height="210" viewBox="-105 -105 210 210" style="left:0;top:0"><line x1="0.00" y1="-87.00" x2="0.00" y2="-97.40" stroke="#c2c2c2" stroke-width="1"/><line x1="22.65" y1="-84.52" x2="24.23" y2="-90.41" stroke="#d2d2d2" stroke-width="1"/><line x1="43.75" y1="-75.78" x2="46.80" y2="-81.06" stroke="#d2d2d2" stroke-width="1"/><line x1="61.87" y1="-61.87" x2="66.19" y2="-66.19" stroke="#d2d2d2" stroke-width="1"/><line x1="75.78" y1="-43.75" x2="81.06" y2="-46.80" stroke="#d2d2d2" stroke-width="1"/><line x1="84.52" y1="-22.65" x2="90.41" y2="-24.23" stroke="#d2d2d2" stroke-width="1"/><line x1="87.00" y1="-0.00" x2="97.40" y2="-0.00" stroke="#c2c2c2" stroke-width="1"/><line x1="84.52" y1="22.65" x2="90.41" y2="24.23" stroke="#d2d2d2" stroke-width="1"/><line x1="75.78" y1="43.75" x2="81.06" y2="46.80" stroke="#d2d2d2" stroke-width="1"/><line x1="61.87" y1="61.87" x2="66.19" y2="66.19" stroke="#d2d2d2" stroke-width="1"/><line x1="43.75" y1="75.78" x2="46.80" y2="81.06" stroke="#d2d2d2" stroke-width="1"/><line x1="22.65" y1="84.52" x2="24.23" y2="90.41" stroke="#d2d2d2" stroke-width="1"/><line x1="0.00" y1="87.00" x2="0.00" y2="97.40" stroke="#c2c2c2" stroke-width="1"/><line x1="-22.65" y1="84.52" x2="-24.23" y2="90.41" stroke="#d2d2d2" stroke-width="1"/><line x1="-43.75" y1="75.78" x2="-46.80" y2="81.06" stroke="#d2d2d2" stroke-width="1"/><line x1="-61.87" y1="61.87" x2="-66.19" y2="66.19" stroke="#d2d2d2" stroke-width="1"/><line x1="-75.78" y1="43.75" x2="-81.06" y2="46.80" stroke="#d2d2d2" stroke-width="1"/><line x1="-84.52" y1="22.65" x2="-90.41" y2="24.23" stroke="#d2d2d2" stroke-width="1"/><line x1="-87.00" y1="0.00" x2="-97.40" y2="0.00" stroke="#c2c2c2" stroke-width="1"/><line x1="-84.52" y1="-22.65" x2="-90.41" y2="-24.23" stroke="#d2d2d2" stroke-width="1"/><line x1="-75.78" y1="-43.75" x2="-81.06" y2="-46.80" stroke="#d2d2d2" stroke-width="1"/><line x1="-61.87" y1="-61.87" x2="-66.19" y2="-66.19" stroke="#d2d2d2" stroke-width="1"/><line x1="-43.75" y1="-75.78" x2="-46.80" y2="-81.06" stroke="#d2d2d2" stroke-width="1"/><line x1="-22.65" y1="-84.52" x2="-24.23" y2="-90.41" stroke="#d2d2d2" stroke-width="1"/><circle cx="0" cy="0" r="85.5" fill="none" stroke="#f4f4f4" stroke-width="4.2"/><path d="M-1.49 -85.49 A85.5 85.5 0 0 1 75.56 -40.01" fill="none" stroke="#4caf50" stroke-width="4.2"/></svg><span class="t" style="left:47.80px;top:52.78px;font-size:24px;color:#555;">17</span><span class="t" style="left:77.96px;top:54.33px;font-size:23px;color:#555;transform:scaleX(.77);transform-origin:0 50%;-webkit-text-stroke:.35px #555;">%</span><figcaption class="t" style="left:87.80px;top:142.05px;font-size:9.8px;font-weight:700;color:#7e7e7e;transform:scaleX(0.8381);transform-origin:0 50%;-webkit-text-stroke:.25px;">LOCAL DISK SPACE</figcaption></figure>
<dl style="margin:0">
<dt class="t" style="left:20.60px;top:278.80px;font-size:13px;letter-spacing:0.038px;-webkit-text-stroke:.55px #000;">System hostname</dt><a class="t" style="left:282.80px;top:278.80px;font-size:13px;color:#1b4794;letter-spacing:0.035px;margin:0;-webkit-text-stroke:.35px;">sv.quyenlt.com (103.221.220.179)</a>
<dt class="t" style="left:20.60px;top:307.80px;font-size:13px;letter-spacing:-0.013px;-webkit-text-stroke:.55px #000;">Webmin version</dt><dd class="t" style="left:282.80px;top:307.80px;font-size:13px;color:#111;letter-spacing:0.012px;margin:0;-webkit-text-stroke:.2px;">2.105</dd>
<dt class="t" style="left:20.60px;top:336.80px;font-size:13px;letter-spacing:0.132px;-webkit-text-stroke:.55px #000;">Virtualmin version</dt><dd class="t" style="left:282.80px;top:336.80px;font-size:13px;color:#111;letter-spacing:-0.094px;margin:0;-webkit-text-stroke:.2px;">7.9.0</dd>
<dt class="t" style="left:20.60px;top:365.80px;font-size:13px;letter-spacing:0.084px;-webkit-text-stroke:.55px #000;">Time on system</dt><a class="t" style="left:282.80px;top:365.80px;font-size:13px;color:#1b4794;letter-spacing:-0.188px;margin:0;-webkit-text-stroke:.35px;">Wednesday, December 20, 2023 5:14 PM</a>
<dt class="t" style="left:20.60px;top:394.80px;font-size:13px;letter-spacing:0.154px;-webkit-text-stroke:.55px #000;">Processor information</dt><dd class="t" style="left:282.80px;top:394.80px;font-size:13px;color:#111;letter-spacing:-0.209px;margin:0;-webkit-text-stroke:.2px;">QEMU Virtual CPU version 2.5+, 4 cores</dd>
<dt class="t" style="left:20.60px;top:423.80px;font-size:13px;letter-spacing:-0.066px;-webkit-text-stroke:.55px #000;">Running processes</dt><a class="t" style="left:282.80px;top:423.80px;font-size:13px;color:#1b4794;margin:0;-webkit-text-stroke:.35px;">156</a>
<dt class="t" style="left:20.60px;top:452.80px;font-size:13px;letter-spacing:-0.114px;-webkit-text-stroke:.55px #000;">Real memory</dt><dd class="t" style="left:282.80px;top:452.80px;font-size:13px;color:#111;letter-spacing:-0.047px;margin:0;-webkit-text-stroke:.2px;">1009.13 MiB used / 2.25 GiB cached / 3.92 GiB total</dd>
<dt class="t" style="left:20.60px;top:481.80px;font-size:13px;letter-spacing:-0.060px;-webkit-text-stroke:.55px #000;">Package updates</dt><a class="t" style="left:282.80px;top:481.80px;font-size:13px;color:#1b4794;letter-spacing:-0.015px;margin:0;-webkit-text-stroke:.35px;">All installed packages are up to date</a>
</dl>
<dl style="margin:0">
<dt class="t" style="left:676.60px;top:278.80px;font-size:13px;-webkit-text-stroke:.55px #000;">Operating system</dt><dd class="t" style="left:873.30px;top:278.80px;font-size:13px;color:#111;letter-spacing:-0.039px;margin:0;-webkit-text-stroke:.2px;">AlmaLinux 8.9</dd>
<dt class="t" style="left:676.60px;top:307.80px;font-size:13px;letter-spacing:0.012px;-webkit-text-stroke:.55px #000;">Usermin version</dt><dd class="t" style="left:873.30px;top:307.80px;font-size:13px;color:#111;letter-spacing:-0.010px;margin:0;-webkit-text-stroke:.2px;">2.005</dd>
<dt class="t" style="left:676.60px;top:336.80px;font-size:13px;letter-spacing:0.090px;-webkit-text-stroke:.55px #000;">Authentic theme version</dt><dd class="t" style="left:873.30px;top:336.80px;font-size:13px;color:#111;letter-spacing:-0.042px;margin:0;-webkit-text-stroke:.2px;">21.09.5</dd>
<dt class="t" style="left:676.60px;top:365.80px;font-size:13px;letter-spacing:-0.293px;-webkit-text-stroke:.55px #000;">Kernel and CPU</dt><dd class="t" style="left:873.30px;top:365.80px;font-size:13px;color:#111;letter-spacing:-0.147px;margin:0;-webkit-text-stroke:.2px;">Linux 4.18.0-477.27.1.el8_8.x86_64 on x86_64</dd>
<dt class="t" style="left:676.60px;top:394.80px;font-size:13px;letter-spacing:0.049px;-webkit-text-stroke:.55px #000;">System uptime</dt><a class="t" style="left:873.30px;top:394.80px;font-size:13px;color:#1b4794;letter-spacing:-0.107px;margin:0;-webkit-text-stroke:.35px;">2 days, 22 hours, 59 minutes</a>
<dt class="t" style="left:676.60px;top:423.80px;font-size:13px;letter-spacing:-0.232px;-webkit-text-stroke:.55px #000;">CPU load averages</dt><dd class="t" style="left:873.30px;top:423.80px;font-size:13px;color:#111;letter-spacing:0.014px;margin:0;-webkit-text-stroke:.2px;">0.25 (1 min) 0.09 (5 mins) 0.04 (15 mins)</dd>
<dt class="t" style="left:676.60px;top:452.80px;font-size:13px;letter-spacing:0.031px;-webkit-text-stroke:.55px #000;">Local disk space</dt><dd class="t" style="left:873.30px;top:452.80px;font-size:13px;color:#111;letter-spacing:-0.080px;margin:0;-webkit-text-stroke:.2px;">6.12 GiB used / 28.23 GiB free / 34.36 GiB total</dd>
</dl>
<span class="vbtn" style="left:322.2px;top:308.2px;width:25.5px;height:14.3px"><svg width="25.5" height="14.3" viewBox="733.2 343.2 25.5 14.3" style="left:-1px;top:-1px"><path fill="#111" fill-rule="evenodd" d="M742.10 347.30 a1.3 1.3 0 0 1 1.3 -1.3 H750.30 V355.20 H743.40 a1.3 1.3 0 0 1 -1.3 -1.3Z M743.70 352.60 H749.10 V353.90 H743.70Z"/></svg></span><span class="vbtn" style="left:317.2px;top:337.3px;width:27.6px;height:14.3px"><svg width="27.6" height="14.3" viewBox="728.2 372.3 27.6 14.3" style="left:-1px;top:-1px"><path fill="#111" d="M737.00 378.20 h5.4 a.8 .8 0 0 1 .8 .8 v3.1 a.8 .8 0 0 1 -.8 .8 h-2.9 l-1.900 1.500 v-1.500 h-.6 a.8 .8 0 0 1 -.8 -.8 v-3.100 a.8 .8 0 0 1 .8 -.8Z"/><path fill="#111" d="M741.20 375.70 h5.300 a.8 .8 0 0 1 .8 .8 v3.100 a.8 .8 0 0 1 -.8 .8 h-5.300 a.8 .8 0 0 1 -.8 -.8 v-3.100 a.8 .8 0 0 1 .8 -.8Z" stroke="#fff" stroke-width=".7"/></svg></span><span class="vbtn" style="left:343.8px;top:337.3px;width:26.8px;height:14.3px"><svg width="26.8" height="14.3" viewBox="754.8 372.3 26.8 14.3" style="left:-1px;top:-1px"><path fill="#111" fill-rule="evenodd" d="M764.50 376.40 a1.3 1.3 0 0 1 1.3 -1.3 H772.70 V384.30 H765.80 a1.3 1.3 0 0 1 -1.3 -1.3Z M766.10 381.70 H771.50 V383.00 H766.10Z"/></svg></span><span class="vbtn" style="left:924.2px;top:337.2px;width:26.8px;height:14.4px"><svg width="26.8" height="14.4" viewBox="1335.2 372.2 26.8 14.4" style="left:-1px;top:-1px"><circle cx="1348.80" cy="379.10" r="4.9" fill="#0a0a0a"/><path stroke="#fff" stroke-width="1.300" d="M1348.80 378.40v3.000M1348.80 376.10v1.300"/><path stroke="#fff" stroke-width="1.000" d="M1347.50 381.70h2.600"/></svg></span><span class="vbtn" style="left:950.0px;top:337.2px;width:30.8px;height:14.4px"><svg width="30.8" height="14.4" viewBox="1361.0 372.2 30.8 14.4" style="left:-1px;top:-1px"><path fill="#0a0a0a" d="M1371.60 379.20 a5 5 0 1 1 6.300 4.800 c-.9 .2 -1.300 -.4 -1.100 -1.200 c.3 -1.000 -.1 -1.700 .9 -2.200 c.9 -.4 2.600 .3 3.400 -.6 a5 5 0 0 0 -9.500 -.8Z" transform="rotate(0 1376.60 379.20)"/><circle cx="1376.60" cy="379.20" r="5" fill="#0a0a0a"/><path fill="#fff" d="M1378.20 380.50 c1.200 -.7 3.000 .2 3.600 -.9 l.6 3.600 l-4.000 2.600 c-.7 -.6 -.5 -1.500 -.3 -2.300 c.2 -.9 -.4 -1.800 .1 -3.000Z"/><circle cx="1373.50" cy="380.10" r=".8" fill="#fff"/><circle cx="1374.10" cy="377.30" r=".8" fill="#fff"/><circle cx="1376.80" cy="376.00" r=".8" fill="#fff"/><circle cx="1379.50" cy="377.30" r=".8" fill="#fff"/></svg></span></section>
<section class="panel" style="left:152px;top:561px;width:1345px;height:360px;border-top:1px solid #dcdcdc">
<header class="panel-head" style="top:0;height:33px"><svg width="12" height="8" viewBox="0 0 12 8" style="left:9px;top:11.4px"><path fill="#ababab" d="M0.2 0.4 H10.2 L5.2 5.9Z"/></svg><h2 class="t" style="left:25.40px;top:7.56px;font-size:16px;letter-spacing:0.049px;margin:0;font-weight:400;">Stats History</h2></header>
<svg width="1343" height="330" viewBox="411 596 1343 330" style="left:0;top:34px"><path d="M494.10 624.05H1728.96M494.10 648.85H1728.96M494.10 673.65H1728.96M494.10 624.05V673.65M597.13 624.05V673.65M700.16 624.05V673.65M803.19 624.05V673.65M906.22 624.05V673.65M1009.25 624.05V673.65M1112.28 624.05V673.65M1215.31 624.05V673.65M1318.34 624.05V673.65M1421.37 624.05V673.65M1524.40 624.05V673.65M1627.43 624.05V673.65" fill="none" stroke="#000" stroke-opacity=".2" stroke-width="1" stroke-dasharray="2 2"/><path d="M494.1 673.1 L597.1 669.6 L699.8 665.2 L802.8 661.9 L858.0 660.6 L905.9 660.2 L981.8 660.5 L1028.7 661.9 L1112.3 664.9 L1214.7 669.4 L1318.4 672.3 L1421.7 673.1 L1525.0 672.8 L1538.7 672.8 L1542.5 670.0 L1545.5 664.0 L1547.8 660.6 L1549.6 663.0 L1551.6 669.5 L1553.7 673.1 L1627.0 672.5 L1660.4 673.5 L1679.4 673.1 L1682.5 669.0 L1685.0 662.5 L1686.9 660.6 L1689.5 662.3 L1693.5 668.0 L1697.7 672.7 L1703.9 672.4 L1714.7 673.5 L1730.1 673.1 L1730.1 673.6 L494.1 673.6Z" fill="#689f38" fill-opacity=".4"/><path d="M494.1 673.1 L597.1 669.6 L699.8 665.2 L802.8 661.9 L858.0 660.6 L905.9 660.2 L981.8 660.5 L1028.7 661.9 L1112.3 664.9 L1214.7 669.4 L1318.4 672.3 L1421.7 673.1 L1525.0 672.8 L1538.7 672.8 L1542.5 670.0 L1545.5 664.0 L1547.8 660.6 L1549.6 663.0 L1551.6 669.5 L1553.7 673.1 L1627.0 672.5 L1660.4 673.5 L1679.4 673.1 L1682.5 669.0 L1685.0 662.5 L1686.9 660.6 L1689.5 662.3 L1693.5 668.0 L1697.7 672.7 L1703.9 672.4 L1714.7 673.5 L1730.1 673.1" fill="none" stroke="#6aa840" stroke-opacity=".85" stroke-width="1"/><text transform="translate(438.2 648.5) rotate(-90)" text-anchor="middle" font-size="11" fill="#444">CPU</text><path d="M494.10 717.25H1728.96M494.10 742.02H1728.96M494.10 766.80H1728.96M494.10 717.25V766.80M597.13 717.25V766.80M700.16 717.25V766.80M803.19 717.25V766.80M906.22 717.25V766.80M1009.25 717.25V766.80M1112.28 717.25V766.80M1215.31 717.25V766.80M1318.34 717.25V766.80M1421.37 717.25V766.80M1524.40 717.25V766.80M1627.43 717.25V766.80" fill="none" stroke="#000" stroke-opacity=".2" stroke-width="1" stroke-dasharray="2 2"/><path d="M494.1 754.0 L597.0 753.4 L700.0 752.9 L805.0 752.4 L1100.0 752.6 L1215.0 753.2 L1318.0 753.8 L1421.7 754.3 L1538.0 754.2 L1544.0 753.6 L1547.5 753.0 L1551.0 753.6 L1556.0 754.3 L1676.0 754.3 L1682.0 753.6 L1686.5 753.0 L1691.0 753.6 L1697.0 754.2 L1730.1 754.1 L1730.1 766.8 L494.1 766.8Z" fill="#689f38" fill-opacity=".4"/><path d="M494.1 754.0 L597.0 753.4 L700.0 752.9 L805.0 752.4 L1100.0 752.6 L1215.0 753.2 L1318.0 753.8 L1421.7 754.3 L1538.0 754.2 L1544.0 753.6 L1547.5 753.0 L1551.0 753.6 L1556.0 754.3 L1676.0 754.3 L1682.0 753.6 L1686.5 753.0 L1691.0 753.6 L1697.0 754.2 L1730.1 754.1" fill="none" stroke="#6aa840" stroke-opacity=".85" stroke-width="1"/><text transform="translate(438.2 741.7) rotate(-90)" text-anchor="middle" font-size="11" fill="#444">Real Memory</text><path d="M494.10 809.10H1728.96M494.10 833.92H1728.96M494.10 858.75H1728.96M494.10 809.10V858.75M597.13 809.10V858.75M700.16 809.10V858.75M803.19 809.10V858.75M906.22 809.10V858.75M1009.25 809.10V858.75M1112.28 809.10V858.75M1215.31 809.10V858.75M1318.34 809.10V858.75M1421.37 809.10V858.75M1524.40 809.10V858.75M1627.43 809.10V858.75" fill="none" stroke="#000" stroke-opacity=".2" stroke-width="1" stroke-dasharray="2 2"/><path d="M494.1 820.9 L700.0 820.6 L900.0 820.3 L1100.0 820.0 L1421.7 819.6 L1480.0 820.2 L1525.0 820.2 L1538.0 819.8 L1543.5 818.8 L1548.0 820.2 L1600.0 820.3 L1655.0 820.4 L1672.0 819.6 L1680.8 818.5 L1687.0 819.7 L1715.0 820.1 L1724.0 819.6 L1730.1 820.2" fill="none" stroke="#5e83cf" stroke-opacity=".9" stroke-width="1"/><text transform="translate(438.2 833.6) rotate(-90)" text-anchor="middle" font-size="11" fill="#444">Process</text><path d="M494.10 901.60V951.00M597.13 901.60V951.00M700.16 901.60V951.00M803.19 901.60V951.00M906.22 901.60V951.00M1009.25 901.60V951.00M1112.28 901.60V951.00M1215.31 901.60V951.00M1318.34 901.60V951.00M1421.37 901.60V951.00M1524.40 901.60V951.00M1627.43 901.60V951.00" fill="none" stroke="#000" stroke-opacity=".2" stroke-width="1" stroke-dasharray="2 2"/><path d="M494.1 950.0 L1540.0 950.0 L1547.0 940.0 L1554.0 905.5 L1561.0 940.0 L1568.0 950.0 L1730.0 950.0" fill="none" stroke="#999" stroke-width="1"/><text transform="translate(438.2 903.4) rotate(-90)" text-anchor="end" font-size="11" fill="#444">Disk IO</text></svg>
<span class="t" style="right:1266.20px;top:52.61px;font-size:9.5px;color:#111;-webkit-text-stroke:.2px;">100%</span><span class="t" style="right:1266.20px;top:77.41px;font-size:9.5px;color:#111;-webkit-text-stroke:.2px;">50%</span><span class="t" style="right:1266.20px;top:102.21px;font-size:9.5px;color:#111;-webkit-text-stroke:.2px;">0</span><span class="t" style="left:83.20px;top:116.56px;font-size:9.5px;color:#111;letter-spacing:-0.060px;-webkit-text-stroke:.2px;">5:04 PM</span><span class="t" style="left:186.23px;top:116.56px;font-size:9.5px;color:#111;letter-spacing:-0.060px;-webkit-text-stroke:.2px;">5:05 PM</span><span class="t" style="left:289.26px;top:116.56px;font-size:9.5px;color:#111;letter-spacing:-0.060px;-webkit-text-stroke:.2px;">5:06 PM</span><span class="t" style="left:392.29px;top:116.56px;font-size:9.5px;color:#111;letter-spacing:-0.060px;-webkit-text-stroke:.2px;">5:07 PM</span><span class="t" style="left:495.32px;top:116.56px;font-size:9.5px;color:#111;letter-spacing:-0.060px;-webkit-text-stroke:.2px;">5:07 PM</span><span class="t" style="left:598.35px;top:116.56px;font-size:9.5px;color:#111;letter-spacing:-0.060px;-webkit-text-stroke:.2px;">5:08 PM</span><span class="t" style="left:701.38px;top:116.56px;font-size:9.5px;color:#111;letter-spacing:-0.060px;-webkit-text-stroke:.2px;">5:09 PM</span><span class="t" style="left:804.41px;top:116.56px;font-size:9.5px;color:#111;letter-spacing:-0.060px;-webkit-text-stroke:.2px;">5:10 PM</span><span class="t" style="left:907.44px;top:116.56px;font-size:9.5px;color:#111;letter-spacing:0.048px;-webkit-text-stroke:.2px;">5:11 PM</span><span class="t" style="left:1010.47px;top:116.56px;font-size:9.5px;color:#111;letter-spacing:-0.060px;-webkit-text-stroke:.2px;">5:12 PM</span><span class="t" style="left:1113.50px;top:116.56px;font-size:9.5px;color:#111;letter-spacing:-0.060px;-webkit-text-stroke:.2px;">5:12 PM</span><span class="t" style="left:1216.53px;top:116.56px;font-size:9.5px;color:#111;letter-spacing:-0.060px;-webkit-text-stroke:.2px;">5:13 PM</span>
<span class="t" style="right:1266.20px;top:145.81px;font-size:9.5px;color:#111;-webkit-text-stroke:.2px;">100%</span><span class="t" style="right:1266.20px;top:170.58px;font-size:9.5px;color:#111;-webkit-text-stroke:.2px;">50%</span><span class="t" style="right:1266.20px;top:195.36px;font-size:9.5px;color:#111;-webkit-text-stroke:.2px;">0</span><span class="t" style="left:83.20px;top:209.71px;font-size:9.5px;color:#111;letter-spacing:-0.060px;-webkit-text-stroke:.2px;">5:04 PM</span><span class="t" style="left:186.23px;top:209.71px;font-size:9.5px;color:#111;letter-spacing:-0.060px;-webkit-text-stroke:.2px;">5:05 PM</span><span class="t" style="left:289.26px;top:209.71px;font-size:9.5px;color:#111;letter-spacing:-0.060px;-webkit-text-stroke:.2px;">5:06 PM</span><span class="t" style="left:392.29px;top:209.71px;font-size:9.5px;color:#111;letter-spacing:-0.060px;-webkit-text-stroke:.2px;">5:07 PM</span><span class="t" style="left:495.32px;top:209.71px;font-size:9.5px;color:#111;letter-spacing:-0.060px;-webkit-text-stroke:.2px;">5:07 PM</span><span class="t" style="left:598.35px;top:209.71px;font-size:9.5px;color:#111;letter-spacing:-0.060px;-webkit-text-stroke:.2px;">5:08 PM</span><span class="t" style="left:701.38px;top:209.71px;font-size:9.5px;color:#111;letter-spacing:-0.060px;-webkit-text-stroke:.2px;">5:09 PM</span><span class="t" style="left:804.41px;top:209.71px;font-size:9.5px;color:#111;letter-spacing:-0.060px;-webkit-text-stroke:.2px;">5:10 PM</span><span class="t" style="left:907.44px;top:209.71px;font-size:9.5px;color:#111;letter-spacing:0.048px;-webkit-text-stroke:.2px;">5:11 PM</span><span class="t" style="left:1010.47px;top:209.71px;font-size:9.5px;color:#111;letter-spacing:-0.060px;-webkit-text-stroke:.2px;">5:12 PM</span><span class="t" style="left:1113.50px;top:209.71px;font-size:9.5px;color:#111;letter-spacing:-0.060px;-webkit-text-stroke:.2px;">5:12 PM</span><span class="t" style="left:1216.53px;top:209.71px;font-size:9.5px;color:#111;letter-spacing:-0.060px;-webkit-text-stroke:.2px;">5:13 PM</span>
<span class="t" style="right:1266.20px;top:237.66px;font-size:9.5px;color:#111;-webkit-text-stroke:.2px;">200</span><span class="t" style="right:1266.20px;top:262.48px;font-size:9.5px;color:#111;-webkit-text-stroke:.2px;">100</span><span class="t" style="right:1266.20px;top:287.31px;font-size:9.5px;color:#111;-webkit-text-stroke:.2px;">0</span><span class="t" style="left:83.20px;top:301.66px;font-size:9.5px;color:#111;letter-spacing:-0.060px;-webkit-text-stroke:.2px;">5:04 PM</span><span class="t" style="left:186.23px;top:301.66px;font-size:9.5px;color:#111;letter-spacing:-0.060px;-webkit-text-stroke:.2px;">5:05 PM</span><span class="t" style="left:289.26px;top:301.66px;font-size:9.5px;color:#111;letter-spacing:-0.060px;-webkit-text-stroke:.2px;">5:06 PM</span><span class="t" style="left:392.29px;top:301.66px;font-size:9.5px;color:#111;letter-spacing:-0.060px;-webkit-text-stroke:.2px;">5:07 PM</span><span class="t" style="left:495.32px;top:301.66px;font-size:9.5px;color:#111;letter-spacing:-0.060px;-webkit-text-stroke:.2px;">5:07 PM</span><span class="t" style="left:598.35px;top:301.66px;font-size:9.5px;color:#111;letter-spacing:-0.060px;-webkit-text-stroke:.2px;">5:08 PM</span><span class="t" style="left:701.38px;top:301.66px;font-size:9.5px;color:#111;letter-spacing:-0.060px;-webkit-text-stroke:.2px;">5:09 PM</span><span class="t" style="left:804.41px;top:301.66px;font-size:9.5px;color:#111;letter-spacing:-0.060px;-webkit-text-stroke:.2px;">5:10 PM</span><span class="t" style="left:907.44px;top:301.66px;font-size:9.5px;color:#111;letter-spacing:0.048px;-webkit-text-stroke:.2px;">5:11 PM</span><span class="t" style="left:1010.47px;top:301.66px;font-size:9.5px;color:#111;letter-spacing:-0.060px;-webkit-text-stroke:.2px;">5:12 PM</span><span class="t" style="left:1113.50px;top:301.66px;font-size:9.5px;color:#111;letter-spacing:-0.060px;-webkit-text-stroke:.2px;">5:12 PM</span><span class="t" style="left:1216.53px;top:301.66px;font-size:9.5px;color:#111;letter-spacing:-0.060px;-webkit-text-stroke:.2px;">5:13 PM</span>

</section>
<div style="position:absolute;left:247px;top:918px;width:900px;height:40px;border-radius:14px;box-shadow:0 0 34px 12px rgba(0,0,0,.30)"></div>
</main>
<div id="sb-track"></div><div id="sb-thumb"></div>
<div id="bell"><svg width="20" height="21" viewBox="1891 63 20 21" style="left:9px;top:6px"><path fill="#f6f6f6" d="M1901.200 64.0 a1.100 1.100 0 0 1 1.100 1.100 v.5 c2.500 .6 4.000 2.700 4.000 5.400 c0 3.900 1.500 5.200 3.000 6.600 c.7 .7 .2 2.000 -.9 2.000 h-14.400 c-1.100 0 -1.600 -1.300 -.9 -2.000 c1.500 -1.400 3.000 -2.700 3.000 -6.600 c0 -2.700 1.500 -4.800 4.000 -5.400 v-.5 a1.100 1.100 0 0 1 1.100 -1.100Z"/><path fill="#f6f6f6" d="M1898.900 80.600 h4.600 a2.300 2.300 0 0 1 -4.600 0Z"/></svg></div>
<div id="topline"></div>
<div id="annot"><div style="position:absolute;left:24.3px;top:632.3px;width:169.8px;height:34.4px;box-sizing:border-box;border:3px solid #e22c38;border-radius:1px"></div><svg width="60" height="30" viewBox="240 518 60 30" style="left:240px;top:518px;filter:drop-shadow(1px 1px 1px rgba(0,0,0,.25))"><path fill="#e52b37" d="M243.9 544.6 L261.5 527.1 L264.1 533 L292.3 522.7 L293.9 525.5 L266.2 537.3 L269 543.3Z"/></svg></div>

</body>
</html>
